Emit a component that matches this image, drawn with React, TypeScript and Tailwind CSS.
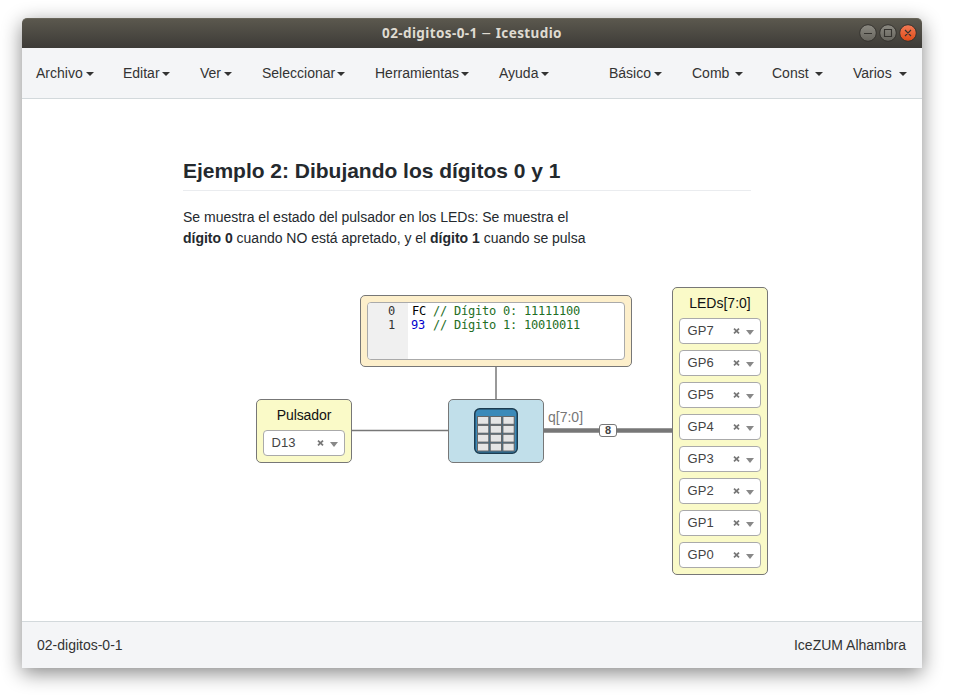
import React from "react";

type MenuEntry = { label: string; slot: string; cell: string };

const leftMenus: MenuEntry[] = [
  { label: "Archivo", slot: "w-[87px]", cell: "w-[50px]" },
  { label: "Editar", slot: "w-[77px]", cell: "w-[39px]" },
  { label: "Ver", slot: "w-[62px]", cell: "w-[24px]" },
  { label: "Seleccionar", slot: "w-[113px]", cell: "w-[75px]" },
  { label: "Herramientas", slot: "w-[124px]", cell: "w-[86px]" },
  { label: "Ayuda", slot: "w-[50px]", cell: "w-[42px]" },
];

const rightMenus: MenuEntry[] = [
  { label: "Básico", slot: "w-[83px]", cell: "w-[45px]" },
  { label: "Comb", slot: "w-[80px]", cell: "w-[43px]" },
  { label: "Const", slot: "w-[81px]", cell: "w-[43px]" },
  { label: "Varios", slot: "w-[54px]", cell: "w-[46px]" },
];

const pins = ["GP7", "GP6", "GP5", "GP4", "GP3", "GP2", "GP1", "GP0"];

function Menu({ label, slot, cell }: MenuEntry) {
  return (
    <div className={`flex shrink-0 items-center whitespace-nowrap ${slot}`}>
      <span className={`shrink-0 ${cell}`}>{label}</span>
      <span className="mt-0.5 h-0 w-0 border-x-4 border-t-4 border-x-transparent border-t-[#333]" />
    </div>
  );
}

function PinSelect({ value }: { value: string }) {
  return (
    <div className="flex h-[26px] w-[82px] items-center rounded-[4px] border border-[#aaa] bg-white pl-[7px] text-[13px] leading-[24px] text-[#444]">
      <span className="w-[46px] pl-[0.5px] tracking-[0.1px]">{value}</span>
      <svg className="-mt-px h-[6px] w-[7px]" viewBox="0 0 7 6">
        <path d="M1 .7 6 5.3M6 .7 1 5.3" stroke="#777" strokeWidth="1.8" />
      </svg>
      <span className="mt-[3px] ml-[6px] h-0 w-0 border-x-4 border-t-[5px] border-x-transparent border-t-[#888]" />
    </div>
  );
}

function TableIcon() {
  const cells = [0, 1, 2, 3].flatMap((row) => [0, 1, 2].map((col) => ({ row, col })));
  return (
    <svg width="44" height="46" viewBox="0 0 44 46">
      <rect x=".75" y=".75" width="42.5" height="44.5" rx="5" fill="#3b8ab9" stroke="#1d3c50" strokeWidth="1.5" />
      <rect x="3" y="8" width="38" height="36" fill="#2c709c" />
      {cells.map(({ row, col }) => (
        <rect
          key={`${row}-${col}`}
          x={3.5 + col * 12.7}
          y={8.5 + row * 8.9}
          width="11.3"
          height="7.8"
          fill="#e5e5e5"
          stroke="#666"
          strokeWidth="1"
        />
      ))}
    </svg>
  );
}

function TitleBar() {
  return (
    <header className="flex h-[30px] shrink-0 items-center rounded-t-[5px] border-t border-[#68655a] bg-gradient-to-b from-[#5b584e] to-[#3d3b37] pr-[5px] pl-[65px]">
      <h1 className="flex-1 text-center font-['Noto_Sans',sans-serif] text-[13.5px] font-bold tracking-[0.4px] text-[#dfdbd2]">
        02-digitos-0-1 <span className="mx-[1.5px] inline-block scale-x-140 font-normal">–</span> Icestudio
      </h1>
      <svg className="-mt-px" width="60" height="20" viewBox="0 0 60 20">
        <defs>
          <linearGradient id="grayButton" x1="0" y1="0" x2="0" y2="1">
            <stop offset="0" stopColor="#8c8a82" />
            <stop offset="1" stopColor="#66645d" />
          </linearGradient>
          <linearGradient id="closeButton" x1="0" y1="0" x2="0" y2="1">
            <stop offset="0" stopColor="#f37b57" />
            <stop offset="1" stopColor="#df4a16" />
          </linearGradient>
        </defs>
        <g stroke="#35332f">
          <circle cx="11" cy="10" r="8.3" fill="url(#grayButton)" />
          <circle cx="31" cy="10" r="8.3" fill="url(#grayButton)" />
          <circle cx="51" cy="10" r="8.3" fill="url(#closeButton)" />
          <path d="M7 10.5h8M27.5 6.5h7v7h-7zM48 7l6 6M54 7l-6 6" fill="none" strokeWidth="1.1" />
        </g>
      </svg>
    </header>
  );
}

export default function App() {
  return (
    <div className="h-[699px] w-[958px] overflow-hidden bg-white px-[22px] pt-[18px] font-['Liberation_Sans',Arial,sans-serif]">
      <div className="flex h-[650px] w-[900px] flex-col rounded-t-[5px] bg-white shadow-[0_5px_20px_0px_rgba(0,0,0,0.48)]">
        <TitleBar />

        <nav className="flex h-[51px] shrink-0 items-center justify-between border-b border-[#d3d9dc] bg-[#f4f5f7] pr-[15px] pl-[14px] text-[14px] text-[#333]">
          <div className="flex">
            {leftMenus.map((m) => (
              <Menu key={m.label} {...m} />
            ))}
          </div>
          <div className="flex">
            {rightMenus.map((m) => (
              <Menu key={m.label} {...m} />
            ))}
          </div>
        </nav>

        <main className="relative flex-1">
          <section className="ml-[161px] w-[568px] pt-[58px] text-[#24292e]">
            <h2 className="h-[34px] border-b border-[#eaecef] text-[21px] leading-[27px] font-bold tracking-[-0.02px] whitespace-nowrap">
              Ejemplo 2: Dibujando los dígitos 0 y 1
            </h2>
            <p className="mt-[16px] text-[14px] leading-[21px] tracking-[-0.01px] whitespace-nowrap">
              Se muestra el estado del pulsador en los LEDs: Se muestra el
              <br />
              <b>dígito 0</b> cuando NO está apretado, y el <b>dígito 1</b> cuando se pulsa
            </p>
          </section>

          <svg className="absolute inset-0 h-full w-full" viewBox="0 0 900 522">
            <path d="M474 267v34" stroke="#999" strokeWidth="2" />
            <path d="M329 331.5h98" stroke="#777" strokeWidth="1.5" />
            <path d="M521 331.5h130" stroke="#777" strokeWidth="4.5" />
          </svg>

          <div className="absolute top-[196px] left-[338px] h-[72px] w-[272px] rounded-[5px] border border-[#777] bg-[#fdefcb] p-[6px]">
            <div className="flex h-full overflow-hidden rounded-[4px] border border-[#aaa] bg-white pt-px font-['DejaVu_Sans_Mono',monospace] text-[12px] leading-[14px] tracking-[-0.224px] whitespace-pre">
              <div className="-mt-px w-[40px] bg-[#f0f0f0] pt-px pr-[13px] text-right text-[#333]">
                <div>0</div>
                <div>1</div>
              </div>
              <div className="pl-[4px] text-[#236e24]">
                <div>
                  <span className="text-black">FC</span> {"// Dígito 0: 11111100"}
                </div>
                <div>
                  <span className="-ml-px pr-px text-[#0000cd]">93</span> {"// Dígito 1: 10010011"}
                </div>
              </div>
            </div>
          </div>

          <div className="absolute top-[300px] left-[234px] flex h-[64px] w-[96px] flex-col items-center rounded-[5px] border border-[#777] bg-[#fafac8]">
            <span className="h-[30px] text-[14px] leading-[30px] tracking-[-0.1px] text-[#111]">Pulsador</span>
            <PinSelect value="D13" />
          </div>

          <div className="absolute top-[300px] left-[426px] flex h-[64px] w-[96px] items-center justify-center rounded-[5px] border border-[#777] bg-[#c1dfea]">
            <TableIcon />
          </div>

          <span className="absolute top-[308px] left-[526px] text-[14px] leading-[20px] text-[#777]">q[7:0]</span>
          <span className="absolute top-[325px] left-[577px] flex h-[13px] w-[18px] items-center justify-center rounded-[3px] border border-[#777] bg-white text-[11px] font-bold text-[#444]">
            8
          </span>

          <div className="absolute top-[188px] left-[650px] flex h-[288px] w-[96px] flex-col items-center gap-[6px] rounded-[5px] border border-[#777] bg-[#fafac8]">
            <span className="-mb-[6px] h-[30px] text-[14px] leading-[30px] text-[#111]">LEDs[7:0]</span>
            {pins.map((pin) => (
              <PinSelect key={pin} value={pin} />
            ))}
          </div>
        </main>

        <footer className="flex h-[47px] shrink-0 items-center justify-between border-t border-[#d3d9dc] bg-[#f4f5f7] pr-[16px] pl-[15px] text-[14px] text-[#333]">
          <span>02-digitos-0-1</span>
          <span>IceZUM Alhambra</span>
        </footer>
      </div>
    </div>
  );
}
